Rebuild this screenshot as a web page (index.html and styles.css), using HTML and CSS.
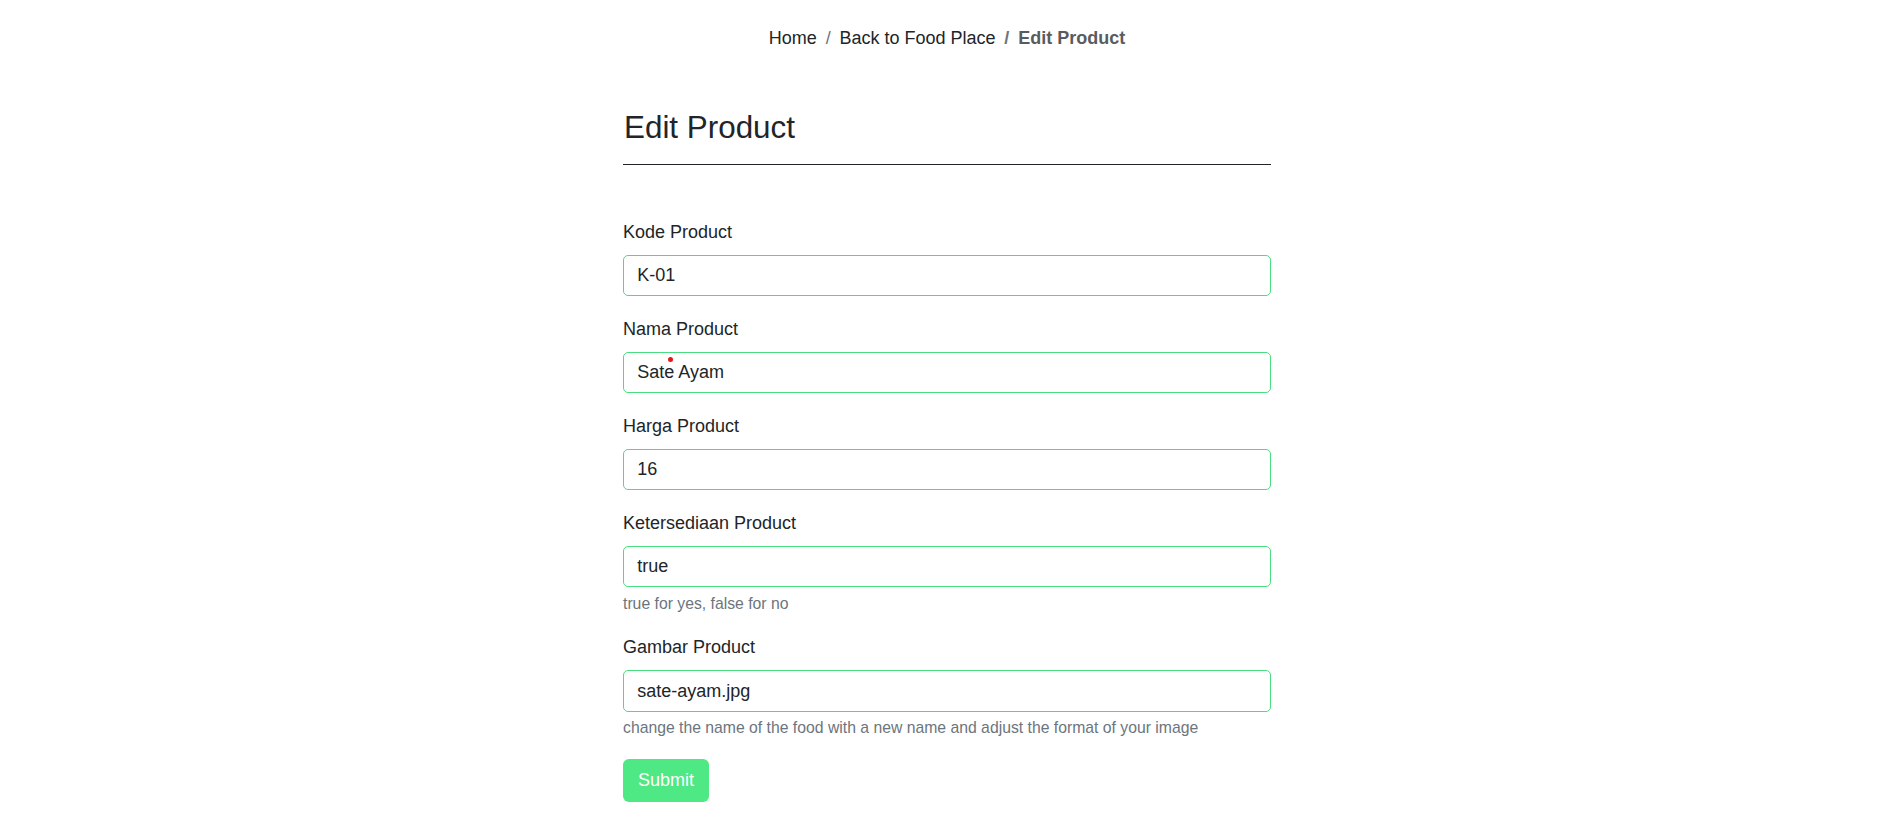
FILE: index.html
```html
<!DOCTYPE html>
<html lang="en">
<head>
<meta charset="utf-8">
<title>Edit Product</title>
<link rel="stylesheet" href="styles.css">
</head>
<body>
<nav class="crumbs">
  <ol class="crumb-list">
    <li class="crumb"><a href="#">Home</a></li>
    <li class="crumb"><a href="#">Back to Food Place</a></li>
    <li class="crumb active">Edit Product</li>
  </ol>
</nav>
<main class="page">
  <h3 class="title">Edit Product</h3>
  <hr class="rule">
  <form class="form">
    <div class="group">
      <label class="label">Kode Product</label>
      <div class="field"><input class="input" type="text" value="K-01"></div>
    </div>
    <div class="group">
      <label class="label">Nama Product</label>
      <div class="field"><input class="input" type="text" value="Sate Ayam"><span class="dot"></span></div>
    </div>
    <div class="group">
      <label class="label">Harga Product</label>
      <div class="field"><input class="input" type="text" value="16"></div>
    </div>
    <div class="group">
      <label class="label">Ketersediaan Product</label>
      <div class="field"><input class="input" type="text" value="true"></div>
      <div class="help">true for yes, false for no</div>
    </div>
    <div class="group">
      <label class="label">Gambar Product</label>
      <div class="field"><input class="input" type="text" value="sate-ayam.jpg"></div>
      <div class="help">change the name of the food with a new name and adjust the format of your image</div>
    </div>
    <button class="submit" type="button">Submit</button>
  </form>
</main>
</body>
</html>
```
FILE: styles.css
```css
* { box-sizing: border-box; }
html, body { margin: 0; padding: 0; background: #fff; }
body {
  font-family: "Liberation Sans", Arial, sans-serif;
  font-size: 18px;
  line-height: 26.4px;
  color: #212529;
}
.crumbs { padding-top: 25px; }
.crumb-list {
  list-style: none;
  margin: 0;
  padding: 0;
  display: flex;
  justify-content: center;
}
.crumb a { color: #212529; text-decoration: none; }
.crumb + .crumb::before {
  content: "/";
  color: #6c757d;
  padding: 0 8.8px;
}
.crumb.active { color: #595c5f; font-weight: 700; }
.page { width: 648px; margin: 0 auto; }
.title {
  font-size: 31.4px;
  font-weight: 400;
  line-height: 37px;
  margin: 58px 0 0 1px;
}
.rule {
  border: 0;
  border-top: 1px solid #212529;
  height: 0;
  margin: 17.5px 0 0;
  opacity: 1;
}
.form { margin-top: 54px; }
.group { margin-bottom: 19.5px; }
.label { display: block; margin-bottom: 9.6px; }
.field { position: relative; }
.input {
  display: block;
  width: 100%;
  height: 41.5px;
  padding: 6.6px 13.2px;
  font-family: inherit;
  font-size: 18px;
  line-height: 26.4px;
  color: #212529;
  background: #fff;
  border: 1px solid #4ade80;
  border-radius: 5px;
  outline: none;
}
.dot {
  position: absolute;
  left: 45px;
  top: 5px;
  width: 5px;
  height: 5px;
  border-radius: 50%;
  background: #e8161b;
}
.help {
  margin-top: 4.4px;
  font-size: 15.75px;
  line-height: 23.1px;
  color: #6c757d;
}
.submit {
  display: inline-block;
  height: 43px;
  padding: 0 15px;
  font-family: inherit;
  font-size: 18px;
  line-height: 43px;
  color: #fff;
  background: #4ee884;
  border: 0;
  border-radius: 6px;
}
```
